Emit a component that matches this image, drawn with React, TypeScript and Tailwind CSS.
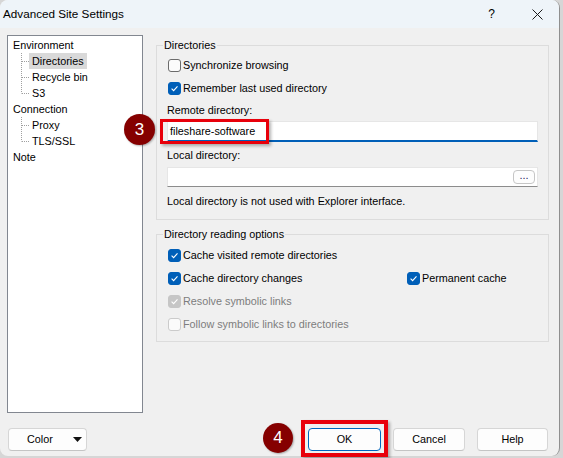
const font = "font-['Liberation_Sans',Arial,sans-serif]";

function Check({ checked, disabled }: { checked?: boolean; disabled?: boolean }) {
  let box = "bg-[#fbfbfb] border-[#6b6b6b]";
  if (checked && !disabled) box = "bg-[#005fb8] border-[#005fb8]";
  if (checked && disabled) box = "bg-[#c6c6c6] border-[#c6c6c6]";
  if (!checked && disabled) box = "bg-[#fbfbfb] border-[#cbcbcb]";
  return (
    <span className={`flex h-[13px] w-[13px] shrink-0 items-center justify-center rounded-[3px] border ${box}`}>
      {checked && (
        <svg width="9" height="9" viewBox="0 0 9 9">
          <path d="M1.6 4.7 L3.6 6.6 L7.5 2.4" fill="none" stroke="white" strokeWidth="1.1" />
        </svg>
      )}
    </span>
  );
}

function CheckRow({ label, checked, disabled }: { label: string; checked?: boolean; disabled?: boolean }) {
  return (
    <div className="flex h-[23px] items-center gap-[2px]">
      <Check checked={checked} disabled={disabled} />
      <span className={disabled ? "text-[#7d7d7d]" : "text-black"}>{label}</span>
    </div>
  );
}

// tree connector: vertical dotted line plus a short horizontal stub
function Branch({ last }: { last?: boolean }) {
  return (
    <svg width="21" height="16" className="shrink-0">
      <line x1="13.5" y1="0" x2="13.5" y2={last ? 8.5 : 16} stroke="#a0a0a0" strokeDasharray="1 1" />
      <line x1="14" y1="8.5" x2="21" y2="8.5" stroke="#a0a0a0" strokeDasharray="1 1" />
    </svg>
  );
}

function TreeChild({ label, last, selected }: { label: string; last?: boolean; selected?: boolean }) {
  return (
    <div className="flex h-[16px] items-center">
      <Branch last={last} />
      <span className={`px-[3px] leading-[16px] ${selected ? "bg-[#d9d9d9]" : ""}`}>{label}</span>
    </div>
  );
}

function Button({ children, primary, className = "" }: { children: React.ReactNode; primary?: boolean; className?: string }) {
  return (
    <div
      className={`flex h-[23px] items-center rounded-[4px] border bg-[#fdfdfd] ${
        primary ? "border-[#0067c0]" : "border-[#d6d6d6] border-b-[#c4c4c4]"
      } ${className}`}
    >
      {children}
    </div>
  );
}

function Badge({ n, className }: { n: string; className: string }) {
  return (
    <div
      className={`absolute flex items-center justify-center rounded-full bg-[#850000] text-[17px] text-white shadow-[1px_1px_2px_rgba(0,0,0,0.3)] ${className}`}
    >
      {n}
    </div>
  );
}

export default function App() {
  return (
    <div className={`relative h-[458px] w-[563px] overflow-hidden bg-[#d6d6d6] text-[10.8px] text-black ${font}`}>
      <div className="flex h-[456px] w-[560px] flex-col overflow-hidden rounded-[8px] border-r border-[#8f8f8f] bg-[#f0f0f0]">
        {/* title bar */}
        <div className="flex h-[28px] shrink-0 items-center bg-[#eef4f9] pl-[3px] text-[11.7px]">
          <span>Advanced Site Settings</span>
          <span className="ml-auto mr-[37px] text-[12px]">?</span>
          <svg width="11" height="11" viewBox="0 0 11 11" className="mr-[16px]">
            <path d="M0.5 0.5 L10.5 10.5 M10.5 0.5 L0.5 10.5" stroke="#1a1a1a" strokeWidth="1" />
          </svg>
        </div>

        {/* body */}
        <div className="flex pl-[7px] pt-[7px]">
          <div className="h-[378px] w-[136px] shrink-0 border border-[#828790] bg-white pl-[5px] pt-[1px]">
            <div className="h-[16px] leading-[16px]">Environment</div>
            <div className="-ml-[5px]">
              <TreeChild label="Directories" selected />
              <TreeChild label="Recycle bin" />
              <TreeChild label="S3" last />
            </div>
            <div className="h-[16px] leading-[16px]">Connection</div>
            <div className="-ml-[5px]">
              <TreeChild label="Proxy" />
              <TreeChild label="TLS/SSL" last />
            </div>
            <div className="h-[16px] leading-[16px]">Note</div>
          </div>

          <div className="ml-[13px] flex w-[393px] flex-col">
            <fieldset className="mt-[2px] border border-[#dcdcdc] pb-[10px]">
              <legend className="ml-[6px] px-[1px] leading-[16px]">Directories</legend>
              <div className="px-[10px]">
                <div className="ml-[1px] mt-[1px]">
                  <CheckRow label="Synchronize browsing" />
                  <CheckRow label="Remember last used directory" checked />
                </div>
                <div className="mt-[2px] h-[16px] leading-[16px]">Remote directory:</div>
                <div className="mt-[3px] flex h-[21px] items-center border border-b-2 border-[#e6e6e6] border-b-[#005fb8] bg-white pl-[2px]">
                  fileshare-software
                </div>
                <div className="mt-[5px] h-[16px] leading-[16px]">Local directory:</div>
                <div className="mt-[4px] flex h-[20px] items-center justify-end border border-[#e6e6e6] border-b-[#8c8c8c] bg-white pr-[2px]">
                  <div className="flex h-[14px] w-[22px] items-center justify-center rounded-[4px] border border-[#c6c6c6] bg-[#fdfdfd] pb-[3px] text-[#1a1a5a]">
                    ...
                  </div>
                </div>
                <div className="mt-[6px] h-[16px] leading-[16px]">Local directory is not used with Explorer interface.</div>
              </div>
            </fieldset>

            <fieldset className="mt-[6px] border border-[#dcdcdc] pb-[5px]">
              <legend className="ml-[6px] px-[1px] leading-[16px]">Directory reading options</legend>
              <div className="ml-[11px] mt-[2px]">
                <CheckRow label="Cache visited remote directories" checked />
                <div className="flex">
                  <div className="w-[239px]">
                    <CheckRow label="Cache directory changes" checked />
                  </div>
                  <CheckRow label="Permanent cache" checked />
                </div>
                <CheckRow label="Resolve symbolic links" checked disabled />
                <CheckRow label="Follow symbolic links to directories" disabled />
              </div>
            </fieldset>
          </div>
        </div>

        {/* bottom buttons */}
        <div className="mt-[15px] flex items-center pl-[8px] pr-[11px]">
          <Button className="w-[79px] pl-[18px] pr-[4px]">
            <span>Color</span>
            <svg width="9" height="5" viewBox="0 0 9 5" className="ml-auto">
              <path d="M0 0 H9 L4.5 5 Z" fill="#111" />
            </svg>
          </Button>
          <div className="ml-auto flex gap-[12px]">
            <Button primary className="w-[73px] justify-center">OK</Button>
            <Button className="w-[72px] justify-center">Cancel</Button>
            <Button className="w-[71px] justify-center">Help</Button>
          </div>
        </div>
      </div>

      {/* annotations */}
      <div className="absolute left-[160px] top-[119px] h-[25px] w-[109px] border-[3px] border-[#e8000b] shadow-[2px_2px_3px_rgba(0,0,0,0.3)]" />
      <Badge n="3" className="left-[124px] top-[114px] h-[31px] w-[31px]" />
      <div className="absolute left-[301px] top-[420px] h-[37px] w-[87px] border-[4px] border-[#e8000b] shadow-[2px_2px_3px_rgba(0,0,0,0.3)]" />
      <Badge n="4" className="left-[263px] top-[423px] h-[30px] w-[30px]" />
    </div>
  );
}
